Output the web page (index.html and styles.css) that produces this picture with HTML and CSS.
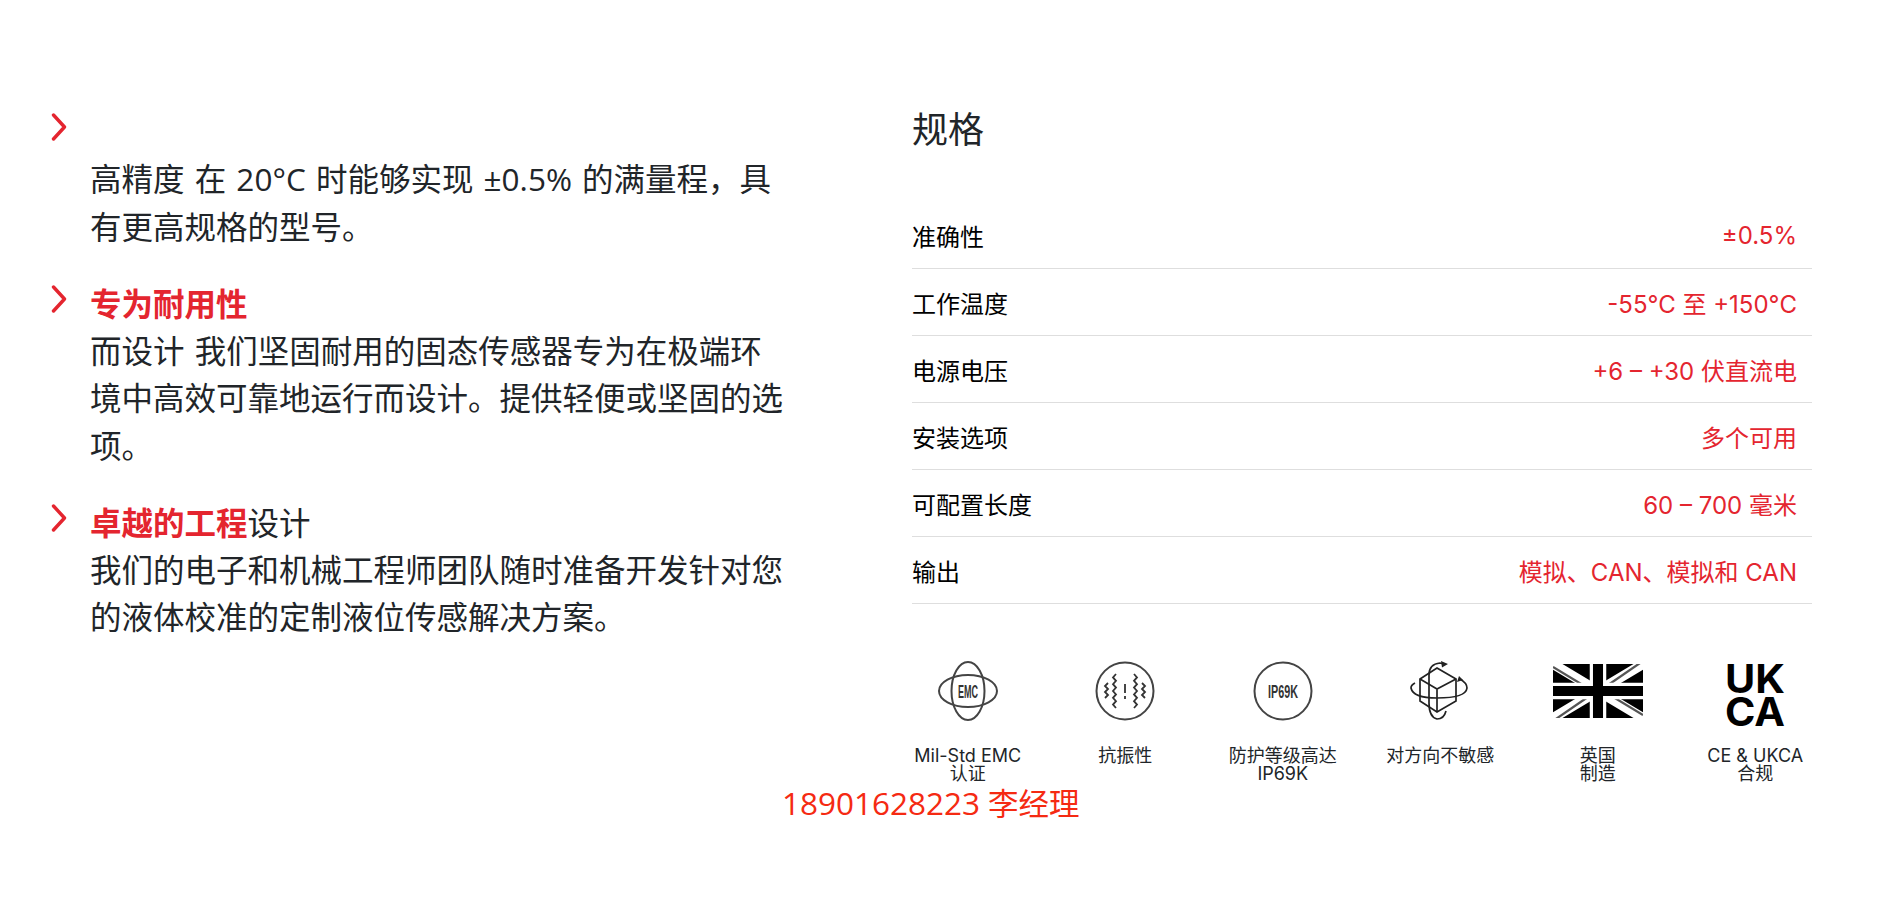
FILE: index.html
```html
<!DOCTYPE html>
<html lang="zh-CN">
<head>
<meta charset="utf-8">
<title>规格</title>
<link rel="stylesheet" href="styles.css">
</head>
<body>
<main class="page">
  <section class="features">
    <div class="feature">
      <svg class="chevron" viewBox="0 0 18 28"><path d="M4.500 2 15.500 14 4.500 26"/></svg>
      <div class="feature-body">
        <div class="feature-title"></div>
        <p>高精度 在 20°C 时能够实现 ±0.5% 的满量程，具有更高规格的型号。</p>
      </div>
    </div>
    <div class="feature">
      <svg class="chevron" viewBox="0 0 18 28"><path d="M4.500 2 15.500 14 4.500 26"/></svg>
      <div class="feature-body">
        <div class="feature-title"><strong>专为耐用性</strong></div>
        <p>而设计 我们坚固耐用的固态传感器专为在极端环境中高效可靠地运行而设计。提供轻便或坚固的选项。</p>
      </div>
    </div>
    <div class="feature">
      <svg class="chevron" viewBox="0 0 18 28"><path d="M4.500 2 15.500 14 4.500 26"/></svg>
      <div class="feature-body">
        <div class="feature-title"><strong>卓越的工程</strong>设计</div>
        <p>我们的电子和机械工程师团队随时准备开发针对您的液体校准的定制液位传感解决方案。</p>
      </div>
    </div>
  </section>
  <section class="specs">
    <h2>规格</h2>
    <div class="spec-table">
      <div class="spec-row"><span>准确性</span><span class="val">±0.5%</span></div>
      <div class="spec-row"><span>工作温度</span><span class="val">-55°C 至 +150°C</span></div>
      <div class="spec-row"><span>电源电压</span><span class="val">+6 – +30 伏直流电</span></div>
      <div class="spec-row"><span>安装选项</span><span class="val">多个可用</span></div>
      <div class="spec-row"><span>可配置长度</span><span class="val">60 – 700 毫米</span></div>
      <div class="spec-row"><span>输出</span><span class="val">模拟、CAN、模拟和 CAN</span></div>
    </div>
    <div class="badges">
      <div class="badge">
        <svg class="icon" viewBox="0 0 60 60"><g class="line"><ellipse cx="30" cy="30" rx="29" ry="16"/><ellipse cx="30" cy="30" rx="16.500" ry="29"/></g><text class="cond" x="30" y="36.500" font-size="18" text-anchor="middle" textLength="20" lengthAdjust="spacingAndGlyphs">EMC</text></svg>
        <div class="label">Mil-Std EMC<br>认证</div>
      </div>
      <div class="badge">
        <svg class="icon" viewBox="0 0 60 60"><circle class="line" cx="30" cy="30" r="28.500"/><g class="wave"><path d="M21 13l-3 3.400 3 3.400-3 3.400 3 3.400-3 3.400 3 3.400-3 3.400 3 3.400-3 3.400 3 3.400"/><path d="M39 13l3 3.400-3 3.400 3 3.400-3 3.400 3 3.400-3 3.400 3 3.400-3 3.400 3 3.400-3 3.400"/><path d="M13 22l-3 3 3 3-3 3 3 3-3 3"/><path d="M47 22l3 3-3 3 3 3-3 3 3 3"/><path d="M30 23v9M30 35v3"/></g></svg>
        <div class="label">抗振性</div>
      </div>
      <div class="badge">
        <svg class="icon" viewBox="0 0 60 60"><circle class="line" cx="30" cy="30" r="28.500"/><text class="cond" x="30" y="36.500" font-size="18" text-anchor="middle" textLength="30" lengthAdjust="spacingAndGlyphs">IP69K</text></svg>
        <div class="label">防护等级高达<br>IP69K</div>
      </div>
      <div class="badge">
        <svg class="icon" viewBox="0 0 60 60"><g class="line thin"><path d="M27 7 46 18V40L27 51 10 40V18Z"/><path d="M10 18 27 28 46 18M27 28V51"/><path d="M36 50Q34 58 27 58 19 56 19 42V14Q19 3 30 2L34 3"/><path d="M5 22Q1 24 1 27 3 37 27 37 56 37 57 27 57 22 50 18"/></g><path class="arrow" d="M38 3 31 0 32 6.500ZM49 15 47 21 53 19Z"/></svg>
        <div class="label">对方向不敏感</div>
      </div>
      <div class="badge">
        <svg class="flag" viewBox="0 0 60 36"><rect width="60" height="36" fill="#000"/><path d="M0 0 60 36M60 0 0 36" stroke="#fff" stroke-width="6.500"/><path d="M0 2 24 16.500M60 -2 36 14.500M60 34 36 19.500M0 38 24 21.500" stroke="#555" stroke-width="1.500"/><path d="M30 0V36M0 18H60" stroke="#fff" stroke-width="11"/><path d="M30 0V36M0 18H60" stroke="#000" stroke-width="6.700"/></svg>
        <div class="label">英国<br>制造</div>
      </div>
      <div class="badge">
        <svg class="icon" viewBox="0 0 60 60"><text class="ukca" x="30" y="32" text-anchor="middle" textLength="60" lengthAdjust="spacingAndGlyphs">UK</text><text class="ukca" x="30" y="65" text-anchor="middle" textLength="60" lengthAdjust="spacingAndGlyphs">CA</text></svg>
        <div class="label">CE &amp; UKCA<br>合规</div>
      </div>
    </div>
  </section>
</main>
<div class="phone"><span class="digits">18901628223</span> 李经理</div>
</body>
</html>
```
FILE: styles.css
```css
* { box-sizing: border-box; }
html, body { margin: 0; padding: 0; background: #fff; }
body {
  height: 905px;
  overflow: hidden;
  font-family: "Inter", "Noto Sans CJK SC", sans-serif;
  color: #212529;
}
.page {
  display: flex;
  padding: 105px 77px 0 49px;
}
.features {
  width: 863px;
  flex: none;
  padding-top: 3px;
  font-family: "Open Sans", "Noto Sans CJK SC", sans-serif;
}
.feature { display: flex; margin-bottom: 30px; }
.chevron {
  flex: none;
  width: 18px;
  height: 28px;
  margin: 5px 23px 0 0;
  fill: none;
  stroke: #e4252f;
  stroke-width: 3.400;
  stroke-linecap: round;
  stroke-linejoin: round;
}
.feature-body { width: 698px; font-size: 31.500px; line-height: 47.250px; word-spacing: 2px; }
.feature-title { min-height: 47.250px; }
.feature-title strong { color: #e4252f; font-weight: 700; }
.feature p { margin: 0; }
.specs { flex: 1; min-width: 0; }
.specs h2 {
  margin: 0 0 47px;
  font-size: 36px;
  line-height: 50px;
  font-weight: 400;
}
.spec-row {
  display: flex;
  justify-content: space-between;
  align-items: center;
  height: 67px;
  padding-right: 15px;
  border-bottom: 1px solid #dedede;
  font-size: 24px;
  color: #000;
}
.val { color: #e4252f; }
.badges {
  display: grid;
  grid-template-columns: repeat(6, 157.5px);
  margin: 57px -23px 0;
}
.badge { display: flex; flex-direction: column; align-items: center; text-align: center; }
.icon { width: 60px; height: 60px; display: block; overflow: visible; }
.flag { width: 90px; height: 54px; margin: 3px 0; display: block; }
.label {
  margin-top: 26px;
  font-size: 18px;
  line-height: 18px;
  color: #212529;
}
.line { fill: none; stroke: #444; stroke-width: 2; }
.thin { stroke: #222; stroke-width: 1.700; }
.wave { fill: none; stroke: #333; stroke-width: 1.800; }
.arrow { fill: #222; }
.cond {
  font-family: "Liberation Sans", sans-serif;
  font-weight: 700;
  fill: #333;
}
.ukca {
  font-family: "Inter", sans-serif;
  font-weight: 700;
  font-size: 39px;
  fill: #000;
}
.phone {
  position: absolute;
  left: 782px;
  top: 782px;
  font-family: "Open Sans", "Noto Sans CJK SC", sans-serif;
  font-size: 30.500px;
  line-height: 42px;
  color: #f52a12;
  white-space: nowrap;
}
.digits { font-size: 31.500px; }
```
